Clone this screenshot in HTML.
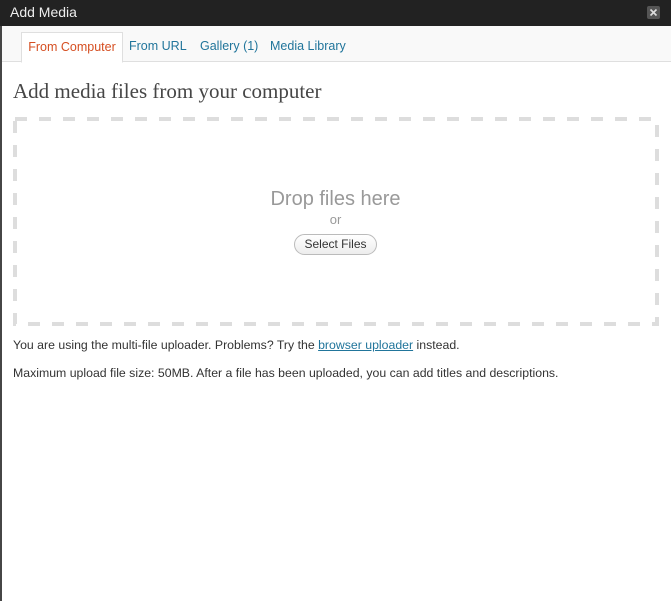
<!DOCTYPE html>
<html><head><meta charset="utf-8"><style>
*{margin:0;padding:0;box-sizing:border-box}
html,body{width:671px;height:601px;overflow:hidden;background:#fff;font-family:"Liberation Sans",Arial,sans-serif}
.frame{position:absolute;left:0;top:0;width:671px;height:601px;border-left:2px solid #464646;}
.bar{position:absolute;left:0;top:0;width:671px;height:26px;background:#222;color:#eee;font-size:14px;line-height:25px;padding-left:10px}
.close{position:absolute;left:647px;top:6px;width:13px;height:13px;background:#555;border-radius:2px}
.close svg{display:block}
.tabs{position:absolute;left:2px;top:26px;width:669px;height:36px;background:#f9f9f9;border-bottom:1px solid #dfdfdf}
.tab{position:absolute;top:6px;height:30px;font-size:12.5px;line-height:28px;color:#21759b}
.active{left:19px;width:102px;background:#fff;border:1px solid #dfdfdf;border-bottom:1px solid #fff;color:#d54e21;text-align:center;top:6px;height:31px}
h2{position:absolute;left:13px;top:79px;font-family:Georgia,"Liberation Serif",serif;font-weight:normal;font-size:21px;color:#464646}
.drop{position:absolute;left:13px;top:117px}
.dt{position:absolute;left:0;width:671px;text-align:center;color:#999}
.btn{position:absolute;left:294px;top:234px;width:83px;height:21px;border:1px solid #bbb;border-radius:11px;background:linear-gradient(#fff,#ededed);font-size:12px;line-height:19px;text-align:center;color:#333}
p{position:absolute;left:13px;font-size:12.3px;color:#333}
a{color:#21759b;text-decoration:underline}
</style></head><body>
<div class="frame"></div>
<div class="bar">Add Media<div class="close"><svg width="13" height="13"><path d="M3.5 3.5L9.5 9.5M9.5 3.5L3.5 9.5" stroke="#ddd" stroke-width="1.6"/></svg></div></div>
<div class="tabs">
<div class="tab active">From Computer</div>
<div class="tab" style="left:127px">From URL</div>
<div class="tab" style="left:198px">Gallery (1)</div>
<div class="tab" style="left:268px">Media Library</div>
</div>
<h2>Add media files from your computer</h2>
<svg class="drop" width="646" height="209"><rect x="2" y="2" width="642" height="205" fill="none" stroke="#dddddd" stroke-width="4" stroke-dasharray="12 12"/></svg>
<div class="dt" style="top:188px;font-size:20px">Drop files here</div>
<div class="dt" style="top:212px;font-size:13px">or</div>
<div class="btn">Select Files</div>
<p style="top:338px">You are using the multi-file uploader. Problems? Try the <a>browser uploader</a> instead.</p>
<p style="top:366px">Maximum upload file size: 50MB. After a file has been uploaded, you can add titles and descriptions.</p>
</body></html>
